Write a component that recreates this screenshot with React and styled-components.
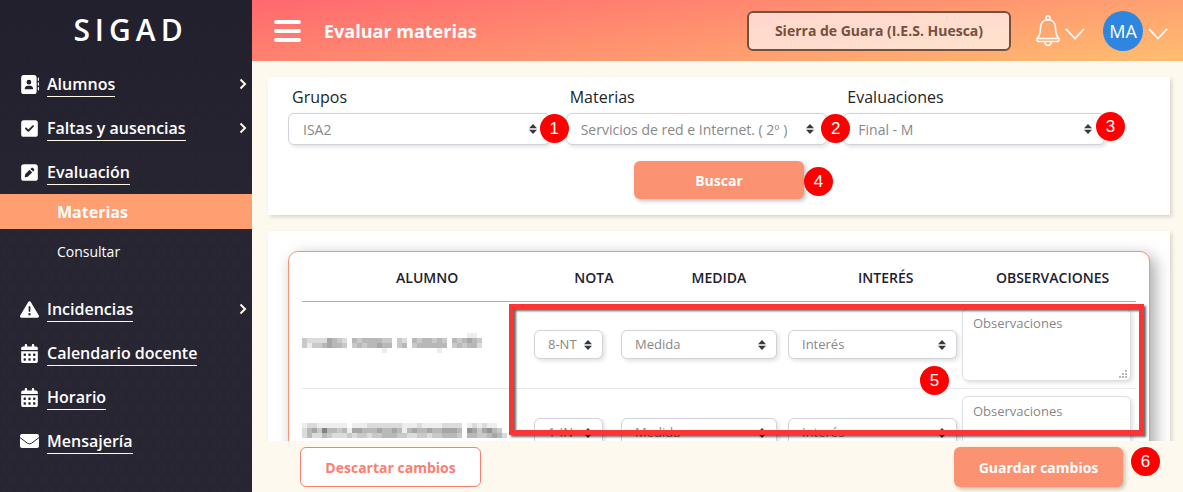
import React from "react";
import styled, { createGlobalStyle } from "styled-components";
import {
  FaAddressBook,
  FaSquareCheck,
  FaSquarePen,
  FaTriangleExclamation,
  FaCalendarDays,
} from "react-icons/fa6";

const GlobalStyle = createGlobalStyle`
  *, *::before, *::after { box-sizing: border-box; }
  body {
    margin: 0;
    background: #fef9ee;
    color: #212529;
    font-family: "Open Sans", "Noto Sans", sans-serif;
    font-size: 16px;
    line-height: 24px;
  }
  button, input, select, textarea { font-family: inherit; }
`;

const Layout = styled.div`
  display: flex;
  height: 100vh;
  overflow: hidden;
`;

/* Sidebar */

const Sidebar = styled.aside`
  position: relative;
  flex: 0 0 252px;
  background: linear-gradient(#22202d, #282633 50%);
  color: #fff;
`;

const HexPattern = styled.svg`
  position: absolute;
  inset: 0;
  width: 100%;
  height: 100%;
`;

const SidebarBody = styled.div`
  position: relative;
`;

const Brand = styled.div`
  padding: 10px 0 0 9px;
  height: 62px;
  font-size: 30px;
  line-height: 40px;
  font-weight: 600;
  letter-spacing: 5px;
  text-align: center;
`;

const Menu = styled.ul`
  list-style: none;
  margin: 0;
  padding: 0;
`;

const MenuRow = styled.li`
  display: flex;
  align-items: center;
  height: 44px;
  padding: 0 5px 0 20px;
`;

const MenuIcon = styled.span`
  display: flex;
  width: 27px;
  font-size: 19px;
`;

const MenuLink = styled.a`
  color: #fff;
  font-weight: 600;
  text-decoration: none;
  border-bottom: 1px solid #fff9e8;
`;

const MenuArrow = styled.svg`
  margin-left: auto;
  width: 8px;
  height: 12px;
`;

const SubMenu = styled.ul`
  list-style: none;
  margin: 0 0 16px;
  padding: 0;
`;

const SubItem = styled.li`
  height: ${(p) => (p.$active ? 35 : 42)}px;
  padding: ${(p) => (p.$active ? 6 : 11)}px 57px 0;
  background: ${(p) => (p.$active ? "#ff9e70" : "transparent")};
  font-size: ${(p) => (p.$active ? 16 : 14)}px;
  font-weight: ${(p) => (p.$active ? 700 : 400)};
  a { color: #fff; text-decoration: none; }
`;

/* Header */

const Main = styled.div`
  flex: 1;
  min-width: 0;
  display: flex;
  flex-direction: column;
`;

const Header = styled.header`
  display: flex;
  align-items: center;
  flex: 0 0 61px;
  padding: 0 15px 0 22px;
  background: linear-gradient(172deg, #ff686f, #ff9c70 62%, #ffbe70);
  color: #fff;
`;

const MenuToggle = styled.button`
  padding: 0;
  border: 0;
  background: none;
  width: 27px;
  height: 24px;
  svg { display: block; }
`;

const PageTitle = styled.h1`
  margin: 0 auto 0 23px;
  font-size: 18px;
  line-height: 24px;
  font-weight: 700;
`;

const CentreButton = styled.button`
  height: 40px;
  width: 264px;
  border: 2px solid #75503f;
  border-radius: 6px;
  background: rgba(255, 255, 255, 0.65);
  color: #75503f;
  font-size: 14px;
  font-weight: 700;
`;

const HeaderMenu = styled.button`
  display: flex;
  align-items: center;
  gap: 5px;
  margin-left: ${(p) => p.$gap}px;
  padding: 0;
  border: 0;
  background: none;
`;

const Avatar = styled.span`
  width: 40px;
  height: 40px;
  border-radius: 50%;
  background: #2e86e0;
  color: #fff;
  font-size: 18px;
  line-height: 40px;
  text-align: center;
`;

const ChevronSvg = styled.svg`
  width: 20px;
  height: 12px;
  margin-top: 6px;
`;

/* Content */

const Content = styled.main`
  flex: 1;
  min-height: 0;
  overflow: hidden;
  padding: 16px 13px 0 16px;
`;

const Card = styled.section`
  background: #fff;
  box-shadow: 2px 2px 4px rgba(0, 0, 0, 0.15);
  margin-bottom: 16px;
`;

const FilterCard = styled(Card)`
  padding: 8px 65px 16px 20px;
`;

const Filters = styled.div`
  display: grid;
  grid-template-columns: repeat(3, 1fr);
  gap: 16px;
`;

const FieldBox = styled.div`
  position: relative;
`;

const FieldLabel = styled.label`
  display: block;
  padding-left: 4px;
  margin-bottom: 4px;
`;

const SelectWrap = styled.div`
  position: relative;
  select {
    display: block;
    appearance: none;
    width: 100%;
    height: ${(p) => (p.$small ? 29 : 32)}px;
    padding: ${(p) => (p.$small ? "0 18px 2px 13px" : "0 24px 0 14px")};
    border: 1px solid #ced4da;
    border-radius: 6px;
    background: #fff;
    color: #888;
    font-size: ${(p) => (p.$small ? 13 : 14)}px;
    box-shadow: 2px 2px 4px rgba(0, 0, 0, 0.12);
  }
`;

const SelectArrow = styled.svg`
  position: absolute;
  right: ${(p) => (p.$small ? 11 : 13)}px;
  top: 50%;
  width: 8px;
  height: 10px;
  margin-top: -5px;
  pointer-events: none;
`;

const Badge = styled.span`
  position: absolute;
  z-index: 3;
  width: 29px;
  height: 29px;
  border-radius: 50%;
  background: #fe0000;
  color: #fff;
  font-family: "Liberation Sans", sans-serif;
  font-size: 17px;
  line-height: 29px;
  text-align: center;
  top: ${(p) => p.$top}px;
  right: ${(p) => p.$right}px;
`;

const SearchRow = styled.div`
  display: flex;
  justify-content: center;
  padding: 16px 0 0 45px;
`;

const Anchor = styled.div`
  position: relative;
`;

const SolidButton = styled.button`
  display: block;
  width: ${(p) => p.$width}px;
  height: ${(p) => p.$height}px;
  border: 0;
  border-radius: 6px;
  background: #fb9271;
  color: #fff;
  font-size: 14px;
  font-weight: 700;
  box-shadow: 2px 2px 4px rgba(0, 0, 0, 0.25);
`;

const OutlineButton = styled.button`
  width: 181px;
  height: 40px;
  border: 1px solid #fc7d72;
  border-radius: 6px;
  background: #fff;
  color: #fc7d72;
  font-size: 14px;
  font-weight: 700;
`;

const TableCard = styled(Card)`
  padding: 20px;
  margin: 0;
  overflow: hidden;
`;

const Panel = styled.div`
  position: relative;
  border: 1px solid #fb9271;
  border-radius: 10px;
  padding: 0 13px 16px;
  background: #fff;
  box-shadow: 5px 5px 16px rgba(0, 0, 0, 0.35);
`;

const Table = styled.table`
  display: block;
  thead, tbody { display: block; }
`;

const HeadRow = styled.tr`
  display: grid;
  grid-template-columns: 30fr 10fr 20fr 20fr 20fr;
  align-items: center;
  height: 50px;
  padding-top: 2px;
  border-bottom: 1px solid #fb9271;
  th {
    padding: 0;
    font-size: 14px;
    font-weight: 600;
    color: #22202d;
    text-transform: uppercase;
  }
`;

const BodyRow = styled.tr`
  display: grid;
  grid-template-columns: 232fr 87fr 167fr 174fr 174fr;
  align-items: center;
  height: 87px;
  margin-bottom: 1px;
  padding: 6px 0 7px;
  border-bottom: 1px solid #e9e7ea;
  td { padding: 0; }
`;

const Cell = styled.td`
  && { padding-right: ${(p) => p.$pad}px; }
`;

const NoteWrap = styled.div`
  position: relative;
  textarea {
    display: block;
    width: 100%;
    height: 73px;
    padding: 4px 10px;
    border: 1px solid #dcdfe3;
    border-radius: 6px;
    resize: none;
    background: #fff;
    font-size: 13px;
    line-height: 20px;
    box-shadow: 2px 2px 4px rgba(0, 0, 0, 0.12);
  }
  textarea::placeholder { color: #888; opacity: 1; }
  svg {
    position: absolute;
    right: 4px;
    bottom: 3px;
  }
`;

const Mosaic = styled.svg`
  display: block;
  margin-bottom: 4px;
`;

const Highlight = styled.div`
  position: absolute;
  z-index: 2;
  top: 52px;
  left: 220px;
  left: 25.6%;
  right: 5px;
  height: 131px;
  border: 5px solid #fc3434;
  filter: drop-shadow(2px 2px 1px rgba(0, 0, 0, 0.6));
  pointer-events: none;
`;

const Footer = styled.footer`
  display: flex;
  justify-content: space-between;
  flex: 0 0 51px;
  padding: 6px 60px 0 48px;
`;

const Chevron = () => (
  <ChevronSvg viewBox="0 0 20 12" fill="none" stroke="#fff" strokeWidth="1.8">
    <path d="M1 1l9 9.5L19 1" />
  </ChevronSvg>
);

const EnvelopeIcon = () => (
  <svg width="19" height="14" viewBox="0 0 19 14">
    <rect width="19" height="14" rx="2" fill="#fff" />
    <path d="M0 3.6l7.6 5.7q1.9 1.2 3.8 0L19 3.6" fill="none" stroke="#282633" strokeWidth="1" />
  </svg>
);

const menuTop = [
  { label: "Alumnos", icon: <FaAddressBook />, arrow: true },
  { label: "Faltas y ausencias", icon: <FaSquareCheck />, arrow: true },
  { label: "Evaluación", icon: <FaSquarePen /> },
];

const menuBottom = [
  { label: "Incidencias", icon: <FaTriangleExclamation />, arrow: true },
  { label: "Calendario docente", icon: <FaCalendarDays /> },
  { label: "Horario", icon: <FaCalendarDays /> },
  { label: "Mensajería", icon: <EnvelopeIcon /> },
];

const MenuItem = ({ label, icon, arrow }) => (
  <MenuRow>
    <MenuIcon>{icon}</MenuIcon>
    <MenuLink href="#">{label}</MenuLink>
    {arrow && (
      <MenuArrow viewBox="0 0 8 12" fill="none" stroke="#fff9e8" strokeWidth="2">
        <path d="M1.5 1.5L6 6l-4.500 4.500" />
      </MenuArrow>
    )}
  </MenuRow>
);

const Select = ({ id, label, value, small }) => (
  <SelectWrap $small={small}>
    <select id={id} aria-label={label} defaultValue={value}>
      <option>{value}</option>
    </select>
    <SelectArrow $small={small} viewBox="0 0 8 10" fill="#343a40">
      <path d="M4 0l4 4.200H0zM4 10L0 5.800h8z" />
    </SelectArrow>
  </SelectWrap>
);

const Field = ({ id, label, value, n, top, right }) => (
  <FieldBox>
    <FieldLabel htmlFor={id}>{label}</FieldLabel>
    <Select id={id} value={value} />
    <Badge $top={top} $right={right}>{n}</Badge>
  </FieldBox>
);

const filters = [
  { id: "grupos", label: "Grupos", value: "ISA2", n: 1, top: 29, right: -19 },
  { id: "materias", label: "Materias", value: "Servicios de red e Internet. ( 2º )", n: 2, top: 29, right: -23 },
  { id: "evaluaciones", label: "Evaluaciones", value: "Final - M", n: 3, top: 27, right: -20 },
];

/* Each digit is the darkness of one 5px block of a pixelated name. */
const students = [
  {
    nota: "8-NT",
    blocks: [
      "000000000000000000000000000000000110",
      "322225432043444433032043443430434543",
      "313345443034344544034034444440343442",
      "000000000000000010000000000100000000",
    ],
  },
  {
    nota: "1-IN",
    blocks: [
      "12211111101112222222111211112222012121100",
      "24537443415544454454145445445554065356430",
      "24224322232332334443322332334443044334542",
    ],
  },
];

const PixelName = ({ blocks }) => (
  <Mosaic width={205} height={blocks.length * 5} role="img" aria-label="Nombre oculto" shapeRendering="crispEdges">
    {blocks.flatMap((line, y) =>
      [...line].map((d, x) =>
        d === "0" ? null : (
          <rect key={`${x}-${y}`} x={x * 5} y={y * 5} width="5" height="5" fill="#000" opacity={Number(d) * 0.07} />
        )
      )
    )}
  </Mosaic>
);

const ResizeGrip = () => (
  <svg width="9" height="9" fill="#bbb">
    <path d="M7 1h2v2H7zM4 4h2v2H4zM7 4h2v2H7zM1 7h2v2H1zM4 7h2v2H4zM7 7h2v2H7z" />
  </svg>
);

export default function App() {
  return (
    <Layout>
      <GlobalStyle />
      <Sidebar>
        <HexPattern aria-hidden="true">
          <defs>
            <pattern id="hex" width="14" height="24" patternUnits="userSpaceOnUse">
              <path d="M7 0v4l7 4v8l-7 4v4M7 4L0 8v8l7 4" fill="none" stroke="#1d1b27" strokeOpacity="0.4" />
            </pattern>
          </defs>
          <rect width="100%" height="100%" fill="url(#hex)" />
        </HexPattern>
        <SidebarBody>
          <Brand>SIGAD</Brand>
          <nav>
            <Menu>{menuTop.map((m) => <MenuItem key={m.label} {...m} />)}</Menu>
            <SubMenu>
              <SubItem $active><a href="#">Materias</a></SubItem>
              <SubItem><a href="#">Consultar</a></SubItem>
            </SubMenu>
            <Menu>{menuBottom.map((m) => <MenuItem key={m.label} {...m} />)}</Menu>
          </nav>
        </SidebarBody>
      </Sidebar>

      <Main>
        <Header>
          <MenuToggle aria-label="Menú">
            <svg width="27" height="24" stroke="#fff" strokeWidth="4" strokeLinecap="round">
              <path d="M2 3h23M2 12h23M2 21h23" />
            </svg>
          </MenuToggle>
          <PageTitle>Evaluar materias</PageTitle>
          <CentreButton>Sierra de Guara (I.E.S. Huesca)</CentreButton>
          <HeaderMenu $gap={25} aria-label="Notificaciones">
            <svg width="24" height="32" viewBox="0 0 24 32" fill="none" stroke="#fff" strokeWidth="1.600" strokeLinejoin="round">
              <circle cx="12" cy="2.800" r="2" />
              <path d="M12 4.800c-4.500 0-7.500 3.200-7.500 8 0 6.500-1.300 8.400-3.200 10.400-.8 1.500-.3 3.300 1.200 3.300h19c1.500 0 2-1.800 1.200-3.300-1.900-2-3.200-3.900-3.200-10.400 0-4.800-3-8-7.500-8zM2 23.500h20M8.800 27c.4 4.600 6 4.600 6.400 0" />
            </svg>
            <Chevron />
          </HeaderMenu>
          <HeaderMenu $gap={18} aria-label="Usuario">
            <Avatar>MA</Avatar>
            <Chevron />
          </HeaderMenu>
        </Header>

        <Content>
          <FilterCard>
            <Filters>
              {filters.map((f) => <Field key={f.id} {...f} />)}
            </Filters>
            <SearchRow>
              <Anchor>
                <SolidButton $width={170} $height={38}>Buscar</SolidButton>
                <Badge $top={6} $right={-29}>4</Badge>
              </Anchor>
            </SearchRow>
          </FilterCard>

          <TableCard>
            <Panel>
              <Table>
                <thead>
                  <HeadRow>
                    <th>Alumno</th>
                    <th>Nota</th>
                    <th>Medida</th>
                    <th>Interés</th>
                    <th>Observaciones</th>
                  </HeadRow>
                </thead>
                <tbody>
                  {students.map((s) => (
                    <BodyRow key={s.nota}>
                      <td><PixelName blocks={s.blocks} /></td>
                      <Cell $pad={18}><Select small label="Nota" value={s.nota} /></Cell>
                      <Cell $pad={11}><Select small label="Medida" value="Medida" /></Cell>
                      <Cell $pad={5}><Select small label="Interés" value="Interés" /></Cell>
                      <Cell $pad={5}>
                        <NoteWrap>
                          <textarea aria-label="Observaciones" placeholder="Observaciones" />
                          <ResizeGrip />
                        </NoteWrap>
                      </Cell>
                    </BodyRow>
                  ))}
                </tbody>
              </Table>
              <Highlight />
              <Badge $top={114} $right={200}>5</Badge>
            </Panel>
          </TableCard>
        </Content>

        <Footer>
          <OutlineButton>Descartar cambios</OutlineButton>
          <Anchor>
            <SolidButton $width={169} $height={40}>Guardar cambios</SolidButton>
            <Badge $top={0} $right={-37}>6</Badge>
          </Anchor>
        </Footer>
      </Main>
    </Layout>
  );
}
